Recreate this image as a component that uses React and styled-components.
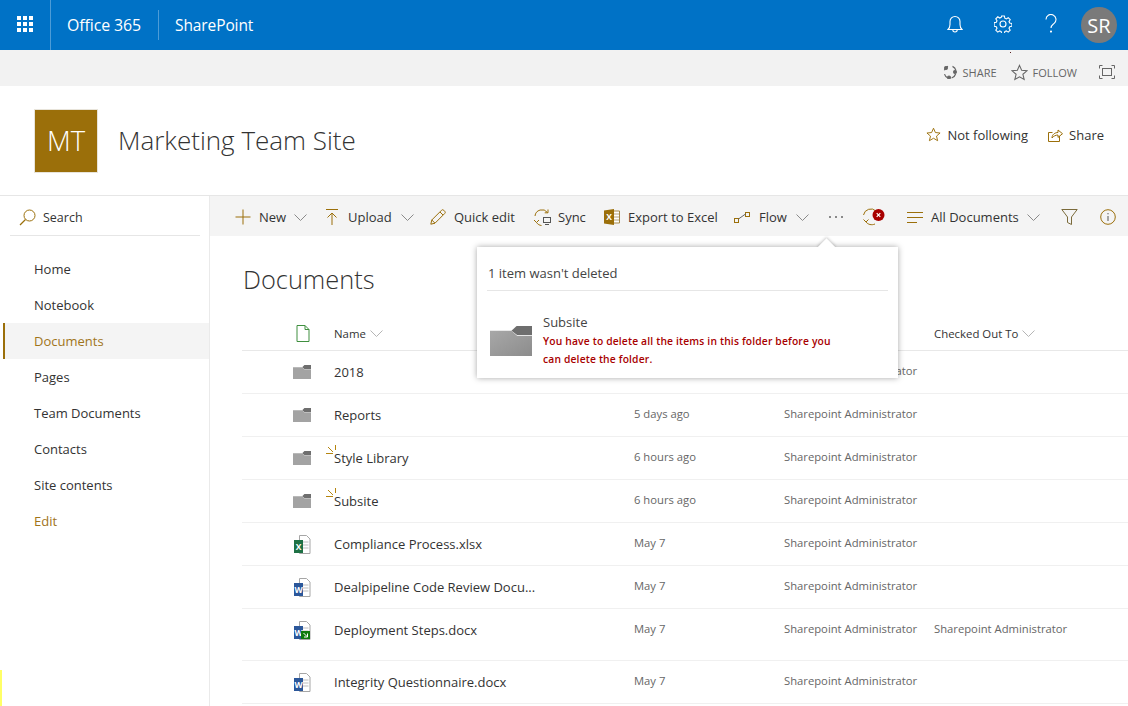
import React from "react";
import styled, { createGlobalStyle } from "styled-components";

const ACCENT = "#9b6f0a";
const FONT = `"Open Sans", "Noto Sans", "Liberation Sans", sans-serif`;
const COLUMNS = "92px 300px 150px 150px 1fr";

const Global = createGlobalStyle`
  html, body { margin: 0; padding: 0; height: 706px; overflow: hidden; background: #fff; }
  body { font-family: ${FONT}; color: #333; }
  * { box-sizing: border-box; }
  svg { display: block; flex: none; }
`;

const Page = styled.div`
  width: 1128px; height: 706px; display: flex; flex-direction: column; overflow: hidden; position: relative;
`;
const Suite = styled.header`
  height: 50px; background: #0072c6; color: #fff; display: flex; align-items: center; flex: none;
`;
const Waffle = styled.div`
  width: 51px; height: 50px; border-right: 1px solid #4d9cd7; display: flex; align-items: center; justify-content: center; padding-bottom: 2px;
`;
const SuiteBrand = styled.div`
  font-size: ${p => p.$size}px; letter-spacing: -0.1px; line-height: 30px; height: 30px; padding: 0 16px; width: ${p => p.$w};
  & + & { border-left: 1px solid #4d9cd7; }
`;
const SuiteRight = styled.div`
  margin-left: auto; display: flex; align-items: center; padding-right: 11px;
`;
const SuiteIcon = styled.div`
  width: 48px; height: 50px; display: flex; align-items: center; justify-content: center; padding-bottom: 3px;
`;
const Avatar = styled.div`
  width: 36px; height: 36px; border-radius: 50%; background: #7a7a7a; color: #fff; font-size: 20px; display: flex; align-items: center; justify-content: center; margin-left: 6px;
`;
const RibbonBar = styled.div`
  height: 36px; background: #f2f2f2; flex: none; display: flex; align-items: center; justify-content: flex-end; padding: 8px 13px 0 0; color: #666; font-size: 11px; position: relative;
`;
const Speck = styled.i`
  position: absolute; left: 1010px; top: 2px; width: 1px; height: 1px; background: #5a2020;
`;
const RibbonAction = styled.div`
  display: flex; align-items: center; gap: ${p => p.$gap}px; margin-right: ${p => p.$mr}px;
`;
const SiteHead = styled.div`
  height: 110px; flex: none; display: flex; align-items: center; padding: 0 24px 0 34px; border-bottom: 1px solid #e6e6e6;
`;
const Logo = styled.div`
  width: 64px; height: 64px; background: ${ACCENT}; border: 1px solid #e8e4da; color: #fff; font-size: 27.5px; font-weight: 300; display: flex; align-items: center; justify-content: center;
`;
const SiteTitle = styled.h1`
  font-size: 26px; font-weight: 300; margin: 0 0 2px 20px; color: #333;
`;
const SiteActions = styled.div`
  margin-left: auto; display: flex; align-items: center; font-size: 13px; color: #333; margin-bottom: 12px;
`;
const SiteAction = styled.div`
  display: flex; align-items: center; gap: 6px; margin-left: ${p => p.$ml || 0}px;
`;
const Body = styled.div`
  flex: 1; display: flex; min-height: 0;
`;
const Nav = styled.nav`
  width: 210px; flex: none; border-right: 1px solid #eaeaea; position: relative;
`;
const SearchBox = styled.div`
  margin: 0 9px 0 10px; height: 40px; border-bottom: 1px solid #e6e6e6; display: flex; align-items: center; gap: 7px; padding: 3px 0 0 9px; font-size: 12.5px; color: #333;
`;
const NavList = styled.div`
  margin-top: 15px; padding-left: 3px;
`;
const NavItem = styled.div`
  height: 36px; display: flex; align-items: center; font-size: 13px; padding-left: ${p => p.$active ? 29 : 31}px;
  color: ${p => p.$accent ? "#a0741a" : "#333"};
  background: ${p => p.$active ? "#f4f4f4" : "transparent"};
  border-left: ${p => p.$active ? `2px solid ${ACCENT}` : "none"};
`;
const YellowMark = styled.i`
  position: absolute; left: 0; bottom: 0; width: 2px; height: 36px; background: #ffff66;
`;
const Main = styled.main`
  flex: 1; min-width: 0; position: relative;
`;
const CommandBar = styled.div`
  height: 40px; background: #f4f4f4; display: flex; align-items: center; padding: 2px 0 0 25px; font-size: 13px; color: #333;
`;
const Cmd = styled.div`
  width: ${p => p.$w}px; flex: none; display: flex; align-items: center; gap: ${p => p.$gap ?? 8}px;
`;
const Chevron = ({ c = "#8a8a8a" }) => (
  <svg width="13" height="7" viewBox="0 0 13 7"><path d="M.5.5l6 6 6-6" fill="none" stroke={c} /></svg>
);
const DocTitle = styled.h2`
  margin: 0; padding: 23px 0 0 33px; height: 82px; font-size: 25.4px; font-weight: 300; color: #333; line-height: 40px;
`;
const List = styled.div`
  margin-left: 32px;
`;
const HeadRow = styled.div`
  height: 33px; display: grid; grid-template-columns: ${COLUMNS}; align-items: center; border-bottom: 1px solid #e8e8e8; font-size: 11.4px; color: #333; padding-bottom: 2px;
`;
const Row = styled.div`
  height: ${p => p.$h || 43}px; display: grid; grid-template-columns: ${COLUMNS}; align-items: start; border-bottom: 1px solid #f0f0f0;
`;
const IconCell = styled.div`
  display: flex; justify-content: flex-end; padding: ${p => p.$top ?? 14}px 23px 0 0;
`;
const HeadIcon = styled.div`
  display: flex; justify-content: flex-end; padding-right: 24px;
`;
const HeadLabel = styled.div`
  display: flex; align-items: center; gap: 4px;
`;
const NameCell = styled.div`
  font-size: 13px; color: #333; line-height: 18px; padding-top: 12px; position: relative; width: fit-content; white-space: nowrap;
`;
const Spark = styled.svg`
  position: absolute; left: -8px; top: 8px;
`;
const MetaCell = styled.div`
  font-size: 11.25px; color: #666; line-height: 16px; padding-top: 12px; white-space: nowrap;
`;
const Popover = styled.div`
  position: absolute; left: 267px; top: 51px; width: 421px; height: 131px; background: #fff; box-shadow: 0 0 6px rgba(0,0,0,.35); padding: 0 10px; z-index: 3;
`;
const Beak = styled.i`
  position: absolute; left: 343px; top: -6px; width: 13px; height: 13px; background: #fff; transform: rotate(45deg); box-shadow: -1px -1px 3px rgba(0,0,0,.2);
`;
const PopHead = styled.div`
  height: 44px; border-bottom: 1px solid #e6e6e6; font-size: 13px; color: #444; line-height: 18px; padding: 17px 0 0 1px; position: relative; background: #fff;
`;
const PopBody = styled.div`
  display: flex; padding: 25px 0 0 3px; gap: 11px; position: relative;
`;
const PopFolder = styled.div`
  padding-top: 10px;
`;
const PopName = styled.div`
  font-size: 13px; line-height: 16px; color: #444; margin-top: -2px;
`;
const PopError = styled.div`
  font-size: 10.3px; font-weight: 600; color: #a80000; line-height: 18px; width: 295px; margin-top: 2px; letter-spacing: .16px;
`;

const Folder = ({ w = 18, h = 14, grad }) => (
  <svg width={w} height={h} viewBox="0 0 18 14" preserveAspectRatio="none">
    {grad && (
      <defs>
        <linearGradient id="popFolder" x1="0" y1="0" x2="1" y2="1">
          <stop offset="0" stopColor="#a8a8a8" />
          <stop offset="1" stopColor="#8c8c8c" />
        </linearGradient>
      </defs>
    )}
    <path d="M9.200 2.200L11.400 0H18v4.200h-6.400z" fill="#6e6e6e" />
    <path d="M0 2.200h9.200l2.400 2.400H18V14H0z" fill={grad ? "url(#popFolder)" : "#a3a3a3"} />
  </svg>
);
const OfficeIcon = ({ kind }) => {
  const c = kind === "x" ? "#1e7145" : "#2b579a";
  return (
    <svg width="17" height="19" viewBox="0 0 17 19">
      <path d="M5.500.5H12.500L16 4v14.500H5.500z" fill="#fff" stroke="#a6a6a6" />
      <path d="M9 7h5.500M9 10h5.500M9 13h5.500" stroke="#bdbdbd" />
      <rect x="0" y="5" width="9" height="13" fill={c} />
      <text x="4.500" y="14.500" fontSize="8.500" fontWeight="700" fill="#fff" textAnchor="middle" fontFamily="Open Sans">{kind === "x" ? "X" : "W"}</text>
      {kind === "wl" && (
        <g>
          <rect x="7" y="10" width="9" height="8" fill="#0e7a0d" />
          <path d="M9.500 12l3.500 3.500M13.500 12.500v3.500H10" fill="none" stroke="#fff" />
        </g>
      )}
    </svg>
  );
};
const Star = ({ c = ACCENT, s = 15 }) => (
  <svg width={s} height={s} viewBox="0 0 16 16"><path d="M8 1.300l2 4.600 5 .5-3.800 3.300 1.200 4.900L8 12l-4.400 2.600 1.200-4.900L1 6.400l5-.5z" fill="none" stroke={c} /></svg>
);

const BY = "Sharepoint Administrator";
const rows = [
  { n: "2018", t: 14, icon: "f", by: BY },
  { n: "Reports", t: 14, icon: "f", m: "5 days ago", by: BY },
  { n: "Style Library", t: 14, icon: "f", isNew: true, m: "6 hours ago", by: BY },
  { n: "Subsite", t: 14, icon: "f", isNew: true, m: "6 hours ago", by: BY },
  { n: "Compliance Process.xlsx", t: 12, icon: "x", m: "May 7", by: BY },
  { n: "Dealpipeline Code Review Docu...", t: 12, icon: "w", m: "May 7", by: BY },
  { n: "Deployment Steps.docx", t: 12, icon: "wl", m: "May 7", by: BY, co: BY, h: 52 },
  { n: "Integrity Questionnaire.docx", t: 12, icon: "w", m: "May 7", by: BY },
];

export default function App() {
  return (
    <Page>
      <Global />
      <Suite>
        <Waffle>
          <svg width="16" height="16" viewBox="0 0 16 16" fill="#fff">
            {[0, 6, 12].map(y => [0, 6, 12].map(x => <rect key={`${x}${y}`} x={x} y={y} width="4" height="4" />))}
          </svg>
        </Waffle>
        <SuiteBrand $size={15.9} $w="107px">Office 365</SuiteBrand>
        <SuiteBrand $size={15.5}>SharePoint</SuiteBrand>
        <SuiteRight>
          <SuiteIcon>
            <svg width="16" height="18" viewBox="0 0 16 18" fill="none" stroke="#fff" strokeWidth="1.100"><path d="M1 14.500h14c-1.600-1.400-2-2.600-2-5V6.500a5 5 0 0 0-10 0v3c0 2.400-.4 3.600-2 5z" /><path d="M5.800 14.800a2.200 2.200 0 0 0 4.400 0" /></svg>
          </SuiteIcon>
          <SuiteIcon>
            <svg width="18" height="18" viewBox="0 0 18 18" fill="none" stroke="#fff" strokeWidth="1.100"><circle cx="9" cy="9" r="3" /><path d="M7.600 1h2.800l.4 2.200 1.500.7 1.900-1.200 2 2-1.200 1.900.7 1.500 2.200.4v2.800l-2.200.4-.7 1.500 1.200 1.900-2 2-1.900-1.200-1.500.7-.4 2.200H7.600l-.4-2.200-1.500-.7-1.900 1.200-2-2 1.200-1.900-.7-1.500-2.200-.4V7.600l2.200-.4.700-1.500-1.200-1.900 2-2 1.900 1.200 1.500-.7z" /></svg>
          </SuiteIcon>
          <SuiteIcon>
            <svg width="12" height="20" viewBox="0 0 12 20" fill="none" stroke="#fff" strokeWidth="1.100"><path d="M1 5.500a5 5 0 1 1 8.200 3.800C7.400 10.800 6 11.400 6 14" /><circle cx="6" cy="17.600" r=".5" fill="#fff" /></svg>
          </SuiteIcon>
          <Avatar>SR</Avatar>
        </SuiteRight>
      </Suite>
      <RibbonBar>
        <Speck />
        <RibbonAction $gap={6} $mr={14}>
          <svg width="14" height="14" viewBox="0 0 14 14" fill="none" stroke="#666" strokeWidth="1.200"><path d="M9.500 1.400a6 6 0 0 1 3.400 4M12.600 9a6 6 0 0 1-4 4M4.600 12.700a6 6 0 0 1-3.100-3.600M1.400 5.200a6 6 0 0 1 3.600-3.800" /><circle cx="3" cy="3" r="1.400" fill="#666" /><circle cx="12" cy="7" r="1.400" fill="#666" /><circle cx="6" cy="12.400" r="1.400" fill="#666" /></svg>
          SHARE
        </RibbonAction>
        <RibbonAction $gap={5} $mr={22}>
          <Star c="#666" s={17} />
          FOLLOW
        </RibbonAction>
        <svg width="16" height="14" viewBox="0 0 16 14" fill="none" stroke="#666"><path d="M.5 3.500v-3h3M12.500.5h3v3M15.500 10.500v3h-3M3.500 13.500h-3v-3" /><rect x="3.500" y="3.500" width="9" height="7" /></svg>
      </RibbonBar>
      <SiteHead>
        <Logo>MT</Logo>
        <SiteTitle>Marketing Team Site</SiteTitle>
        <SiteActions>
          <SiteAction>
            <Star />
            Not following
          </SiteAction>
          <SiteAction $ml={20}>
            <svg width="15" height="14" viewBox="0 0 15 14" fill="none" stroke={ACCENT}><path d="M11.500 8v5.500h-11v-9h4" /><path d="M4 10c0-3.500 3-5.500 6-5.500V2l4.500 3.700L10 9.400V7C8 7 5.500 8 4 10z" /></svg>
            Share
          </SiteAction>
        </SiteActions>
      </SiteHead>
      <Body>
        <Nav>
          <SearchBox>
            <svg width="17" height="17" viewBox="0 0 17 17" fill="none" stroke={ACCENT}><circle cx="10.500" cy="6.500" r="5.500" /><path d="M6.500 10.500L1 16" strokeWidth="1.300" /></svg>
            Search
          </SearchBox>
          <NavList>
            <NavItem>Home</NavItem>
            <NavItem>Notebook</NavItem>
            <NavItem $active $accent>Documents</NavItem>
            <NavItem>Pages</NavItem>
            <NavItem>Team Documents</NavItem>
            <NavItem>Contacts</NavItem>
            <NavItem>Site contents</NavItem>
            <NavItem $accent>Edit</NavItem>
          </NavList>
          <YellowMark />
        </Nav>
        <Main>
          <CommandBar>
            <Cmd $w={90}>
              <svg width="16" height="16" viewBox="0 0 16 16" stroke={ACCENT}><path d="M8 .5v15M.5 8h15" /></svg>
              New<Chevron />
            </Cmd>
            <Cmd $w={105} $gap={9}>
              <svg width="14" height="17" viewBox="0 0 14 17" fill="none" stroke={ACCENT}><path d="M1 .5h12M7 16V4M2.500 8.500L7 4l4.500 4.500" /></svg>
              Upload<Chevron />
            </Cmd>
            <Cmd $w={103}>
              <svg width="16" height="16" viewBox="0 0 16 16" fill="none" stroke={ACCENT}><path d="M.8 15.200l1-4.200L11.500 1.300a1.600 1.600 0 0 1 2.300 0l.9.9a1.600 1.600 0 0 1 0 2.300L5 14.200zM1.800 11L5 14.200M10 3l3 3" /></svg>
              Quick edit
            </Cmd>
            <Cmd $w={71} $gap={6}>
              <svg width="19" height="17" viewBox="0 0 19 17" fill="none" stroke={ACCENT}><path d="M2 7a7 7 0 0 1 12.500-3.500M15 .5v3.300h-3.300M1 11l2.500 2.500L6 11M3.500 13.500c1.500 2 3 2.800 5 3" /><rect x="10.500" y="8.500" width="7" height="5" stroke="#555" /><path d="M12 15.500h4" stroke="#555" /></svg>
              Sync
            </Cmd>
            <Cmd $w={130}>
              <svg width="16" height="16" viewBox="0 0 16 16"><path d="M9 2h6.500v12H9z" fill="#fff" stroke="#a68a4a" /><path d="M10 5h5M10 8h5M10 11h5" stroke="#b8a67a" /><path d="M0 1.500L10 0v16L0 14.500z" fill={ACCENT} /><text x="5" y="11.300" fontSize="8.500" fontWeight="700" fill="#fff" textAnchor="middle" fontFamily="Open Sans">X</text></svg>
              Export to Excel
            </Cmd>
            <Cmd $w={94} $gap={9}>
              <svg width="16" height="11" viewBox="0 0 16 11" fill="none" stroke={ACCENT}><rect x=".5" y="6.500" width="4" height="4" /><rect x="11.500" y=".5" width="4" height="4" /><path d="M4.500 7l7-5" stroke="#666" /></svg>
              Flow<Chevron />
            </Cmd>
            <Cmd $w={34}>
              <svg width="16" height="4" viewBox="0 0 16 4" fill="#666"><circle cx="2" cy="2" r="1" /><circle cx="8" cy="2" r="1" /><circle cx="14" cy="2" r="1" /></svg>
            </Cmd>
            <Cmd $w={45}>
              <svg width="27" height="18" viewBox="0 0 27 18" fill="none"><path d="M1.500 7A7.500 7.500 0 0 1 14 3" stroke={ACCENT} /><path d="M1.500 11.500L4 14l2.500-2.500M4 14c2 2.500 5.500 3.500 9 2" stroke={ACCENT} /><circle cx="16.500" cy="7" r="6" fill="#a80000" /><path d="M14.700 5.200l3.600 3.600M18.300 5.200l-3.600 3.600" stroke="#fff" strokeWidth="1.200" /></svg>
            </Cmd>
            <Cmd $w={154}>
              <svg width="16" height="11" viewBox="0 0 16 11" stroke={ACCENT}><path d="M0 .5h16M0 5.500h16M0 10.500h10" /></svg>
              All Documents<Chevron />
            </Cmd>
            <Cmd $w={39}>
              <svg width="17" height="16" viewBox="0 0 17 16" fill="none" stroke="#7a6a3a"><path d="M.8.5h15.400L10.500 8v7.500l-4-2V8z" /></svg>
            </Cmd>
            <Cmd $w={17}>
              <svg width="16" height="16" viewBox="0 0 16 16" fill="none" stroke={ACCENT}><circle cx="8" cy="8" r="7.300" /><path d="M8 7v5M8 4v1.300" stroke="#555" /></svg>
            </Cmd>
          </CommandBar>
          <DocTitle>Documents</DocTitle>
          <List>
            <HeadRow>
              <HeadIcon>
                <svg width="14" height="17" viewBox="0 0 14 17" fill="#fff" stroke="#3f8f3f"><path d="M1 .5h8l4 4v12H1z" /><path d="M9 .5v4h4" fill="none" /></svg>
              </HeadIcon>
              <HeadLabel>Name <Chevron c="#b5b5b5" /></HeadLabel>
              <div />
              <div />
              <HeadLabel>Checked Out To <Chevron c="#b5b5b5" /></HeadLabel>
            </HeadRow>
            {rows.map(r => (
              <Row key={r.n} $h={r.h}>
                <IconCell $top={r.t}>
                  {r.icon === "f" ? <Folder /> : <OfficeIcon kind={r.icon} />}
                </IconCell>
                <NameCell>
                  {r.isNew && (
                    <Spark width="10" height="10" viewBox="0 0 10 10" fill="none" stroke="#b5850f"><path d="M0 8.500h7M2 2l5 5M9.500 0v5" /></Spark>
                  )}
                  {r.n}
                </NameCell>
                <MetaCell>{r.m}</MetaCell>
                <MetaCell>{r.by}</MetaCell>
                <MetaCell>{r.co}</MetaCell>
              </Row>
            ))}
          </List>
          <Popover>
            <Beak />
            <PopHead>1 item wasn't deleted</PopHead>
            <PopBody>
              <PopFolder><Folder w={42} h={30} grad /></PopFolder>
              <div>
                <PopName>Subsite</PopName>
                <PopError>You have to delete all the items in this folder before you can delete the folder.</PopError>
              </div>
            </PopBody>
          </Popover>
        </Main>
      </Body>
    </Page>
  );
}
